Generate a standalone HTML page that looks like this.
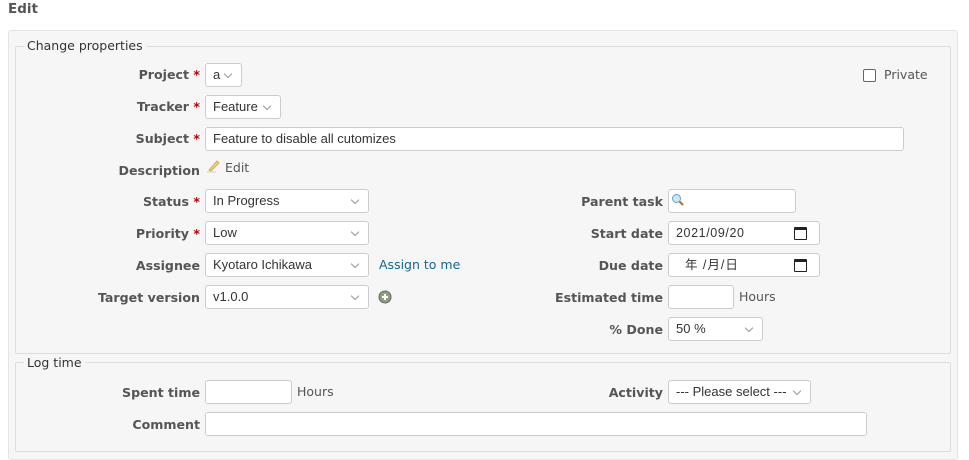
<!DOCTYPE html>
<html><head><meta charset="utf-8"><style>
*{box-sizing:border-box}
body{margin:0;width:969px;height:450px;background:#fff;font-family:"DejaVu Sans",Verdana,sans-serif;font-size:12px;color:#333;position:relative;overflow:hidden}
.a{position:absolute}
h2{position:absolute;left:8px;top:1px;margin:0;font-size:13.5px;font-weight:bold;color:#555}
.box{position:absolute;left:8px;top:30px;width:950px;height:430px;background:#f6f6f6;border:1px solid #e4e4e4;border-radius:3px}
.fs{position:absolute;border:1px solid #ddd;border-radius:2px}
.lg{position:absolute;background:#f6f6f6;padding:0 3px;color:#333;font-size:12.5px}
.lb{position:absolute;text-align:right;font-weight:bold;color:#555;white-space:nowrap;line-height:16px;font-size:12.6px;top:0}
.lb i{font-style:normal;color:#bb0000}
.in{position:absolute;height:24px;background:#fff;border:1px solid #ccc;border-radius:3px;padding:0 7px;line-height:22px;color:#333;white-space:nowrap;font-size:13px;font-family:"Liberation Sans",Arial,sans-serif}
.sel:after{content:"";position:absolute;right:10px;top:7px;width:5px;height:5px;border-right:1.3px solid #999;border-bottom:1.3px solid #999;transform:rotate(45deg)}
.link{position:absolute;color:#169;line-height:16px;font-size:12.5px}
.cal{position:absolute;right:12px;top:5px;width:13px;height:13px;border:1.5px solid #222;border-top-width:3px;border-radius:1px}
</style></head><body>
<h2>Edit</h2>
<div class="box"></div>
<div class="fs" style="left:15px;top:46px;width:936px;height:308px"></div>
<div class="lg" style="left:24px;top:38px">Change properties</div>
<div class="fs" style="left:15px;top:362px;width:936px;height:90px"></div>
<div class="lg" style="left:24px;top:355px">Log time</div>

<div class="lb" style="right:769px;top:67px">Project <i>*</i></div>
<div class="in sel" style="left:205px;top:63px;width:37px">a</div>
<div class="a" style="left:863px;top:69px;width:13px;height:13px;border:1px solid #666;border-radius:2px;background:#fff"></div>
<div class="a" style="left:884px;top:67px;color:#555;line-height:16px;font-size:12.5px">Private</div>

<div class="lb" style="right:769px;top:99px">Tracker <i>*</i></div>
<div class="in sel" style="left:205px;top:95px;width:76px;padding-right:20px">Feature</div>

<div class="lb" style="right:769px;top:131px">Subject <i>*</i></div>
<div class="in" style="left:205px;top:127px;width:699px">Feature to disable all cutomizes</div>

<div class="lb" style="right:769px;top:163px">Description</div>
<svg class="a" style="left:206px;top:159px" width="14" height="14" viewBox="0 0 14 14"><path d="M3 11 L11 2 L13 4 L5 12 Z" fill="#f0d080" stroke="#d0a040" stroke-width="0.8"/><path d="M1 13 H10" stroke="#ccc"/></svg>
<div class="link" style="left:225px;top:160px;color:#555">Edit</div>

<div class="lb" style="right:769px;top:194px">Status <i>*</i></div>
<div class="in sel" style="left:205px;top:189px;width:164px">In Progress</div>
<div class="lb" style="right:769px;top:226px">Priority <i>*</i></div>
<div class="in sel" style="left:205px;top:221px;width:164px">Low</div>
<div class="lb" style="right:769px;top:258px">Assignee</div>
<div class="in sel" style="left:205px;top:253px;width:164px">Kyotaro Ichikawa</div>
<div class="link" style="left:379px;top:257px">Assign to me</div>
<div class="lb" style="right:769px;top:290px">Target version</div>
<div class="in sel" style="left:205px;top:285px;width:164px">v1.0.0</div>
<svg class="a" style="left:378px;top:290px" width="14" height="14" viewBox="0 0 14 14"><circle cx="7" cy="7" r="6" fill="#8f9f80" stroke="#666"/><path d="M7 4V10M4 7H10" stroke="#fff" stroke-width="2"/></svg>

<div class="lb" style="right:306px;top:194px">Parent task</div>
<div class="in" style="left:668px;top:189px;width:128px"></div>
<svg class="a" style="left:671px;top:193px" width="14" height="14" viewBox="0 0 14 14"><circle cx="5.5" cy="5.5" r="4" fill="#cde6f8" stroke="#6aa0cc"/><path d="M8.5 8.5L12 12" stroke="#b07030" stroke-width="2"/></svg>
<div class="lb" style="right:306px;top:226px">Start date</div>
<div class="in" style="left:668px;top:221px;width:152px;font-family:'Liberation Sans','Noto Sans CJK JP',sans-serif;font-size:12.5px;letter-spacing:0.6px">2021/09/20<span class="cal"></span></div>
<div class="lb" style="right:306px;top:258px">Due date</div>
<div class="in" style="left:668px;top:253px;width:152px;font-family:'Liberation Sans','Noto Sans CJK JP',sans-serif;font-size:12.5px;letter-spacing:1px">&nbsp;&nbsp;年 /月/日<span class="cal"></span></div>
<div class="lb" style="right:306px;top:290px">Estimated time</div>
<div class="in" style="left:668px;top:285px;width:66px"></div>
<div class="a" style="left:739px;top:289px;color:#555;line-height:16px;font-size:12.5px">Hours</div>
<div class="lb" style="right:306px;top:322px">% Done</div>
<div class="in sel" style="left:668px;top:317px;width:95px">50 %</div>

<div class="lb" style="right:769px;top:385px">Spent time</div>
<div class="in" style="left:205px;top:380px;width:87px"></div>
<div class="a" style="left:297px;top:384px;color:#555;line-height:16px;font-size:12.5px">Hours</div>
<div class="lb" style="right:306px;top:385px">Activity</div>
<div class="in sel" style="left:668px;top:380px;width:143px;padding-right:18px">--- Please select ---</div>
<div class="lb" style="right:769px;top:417px">Comment</div>
<div class="in" style="left:205px;top:412px;width:662px"></div>
</body></html>
